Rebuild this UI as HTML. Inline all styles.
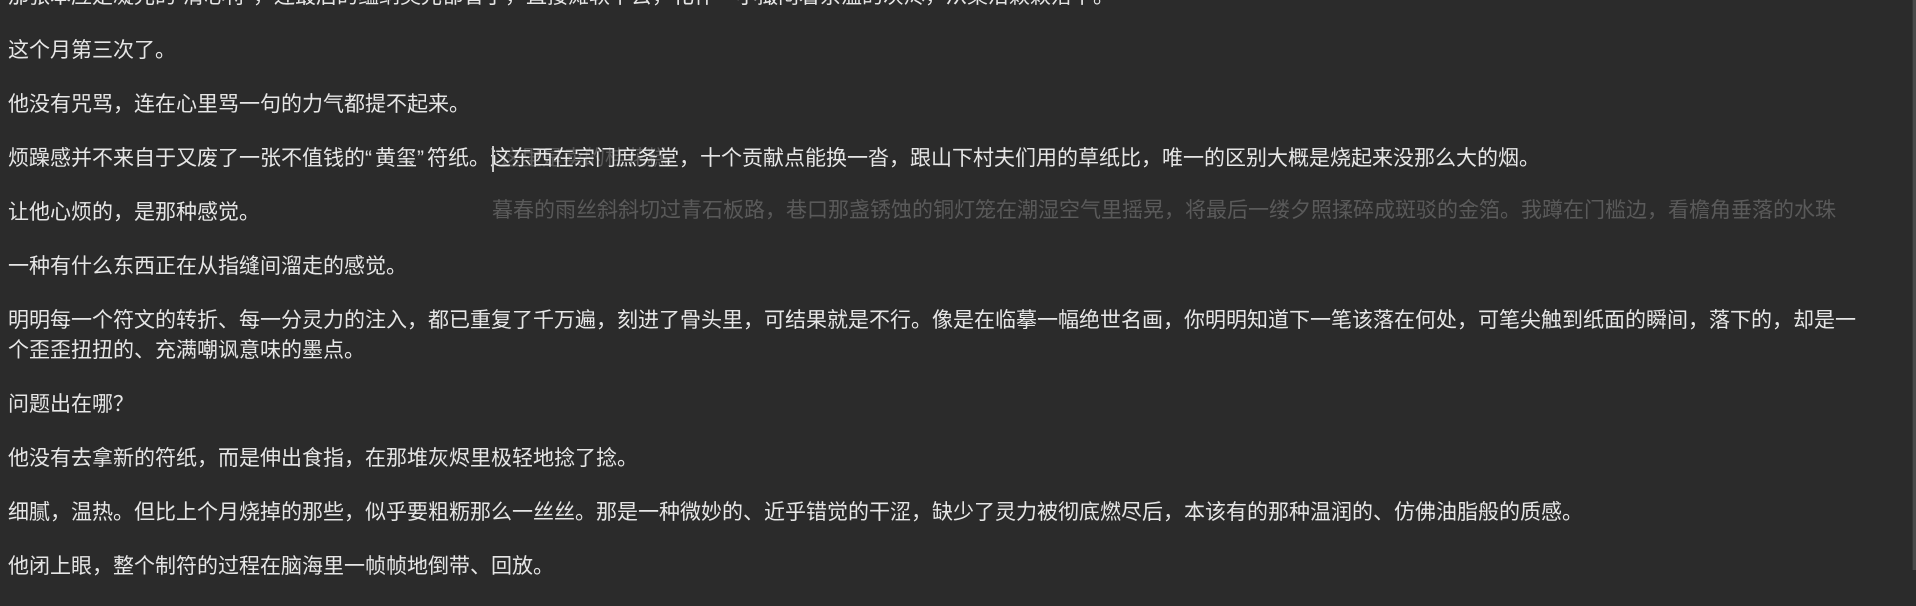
<!DOCTYPE html>
<html><head><meta charset="utf-8">
<style>
html,body{margin:0;padding:0;}
body{width:1916px;height:570px;overflow:hidden;background:#2b2b2b;position:relative;
font-family:"Liberation Sans","Noto Sans CJK SC",sans-serif;font-size:21px;color:#e6e6e6;}
.c{position:absolute;left:8px;top:-18px;width:1880px;}
p{margin:0 0 24px 0;line-height:30px;white-space:nowrap;}
.q{letter-spacing:3px;}
.ghost{position:absolute;color:#5a5a5a;font-size:21px;line-height:30px;white-space:nowrap;font-family:"Liberation Sans","Noto Sans CJK SC",sans-serif;}
.cur{position:absolute;left:492px;top:146px;width:2px;height:26px;background:#c8c8c8;}
.sb{position:absolute;right:0;top:0;width:3px;height:570px;background:#4a4a4a;}
.sb2{position:absolute;right:3px;top:0;width:1px;height:570px;background:#363636;}
</style></head><body>
<div class="ghost" style="left:500px;top:144px;">这里是卖的桂花糕</div>
<div class="ghost" style="left:492px;top:196px;">暮春的雨丝斜斜切过青石板路，巷口那盏锈蚀的铜灯笼在潮湿空气里摇晃，将最后一缕夕照揉碎成斑驳的金箔。我蹲在门槛边，看檐角垂落的水珠</div>
<div class="c">
<p>那张本应是凝光的“清心符”，连最后的蕴纳灵光都省了，直接瘫软下去，化作一小撮闷着余温的灰烬，从桌沿簌簌落下。</p>
<p>这个月第三次了。</p>
<p>他没有咒骂，连在心里骂一句的力气都提不起来。</p>
<p>烦躁感并不来自于又废了一张不值钱的<span class="q">“</span>黄玺<span class="q">”</span>符纸。这东西在宗门庶务堂，十个贡献点能换一沓，跟山下村夫们用的草纸比，唯一的区别大概是烧起来没那么大的烟。</p>
<p>让他心烦的，是那种感觉。</p>
<p>一种有什么东西正在从指缝间溜走的感觉。</p>
<p>明明每一个符文的转折、每一分灵力的注入，都已重复了千万遍，刻进了骨头里，可结果就是不行。像是在临摹一幅绝世名画，你明明知道下一笔该落在何处，可笔尖触到纸面的瞬间，落下的，却是一<br>个歪歪扭扭的、充满嘲讽意味的墨点。</p>
<p>问题出在哪？</p>
<p>他没有去拿新的符纸，而是伸出食指，在那堆灰烬里极轻地捻了捻。</p>
<p>细腻，温热。但比上个月烧掉的那些，似乎要粗粝那么一丝丝。那是一种微妙的、近乎错觉的干涩，缺少了灵力被彻底燃尽后，本该有的那种温润的、仿佛油脂般的质感。</p>
<p>他闭上眼，整个制符的过程在脑海里一帧帧地倒带、回放。</p>
</div>
<div class="cur"></div>
<div class="sb2"></div><div class="sb"></div>
</body></html>
